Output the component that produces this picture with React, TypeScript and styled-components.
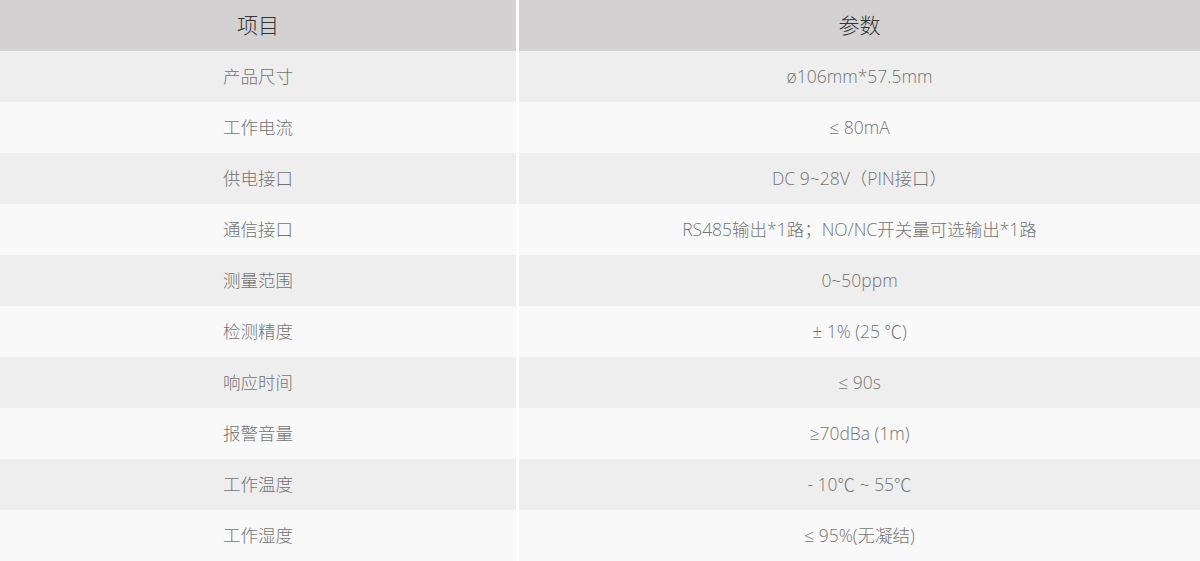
import React from "react";
import styled, {createGlobalStyle} from "styled-components";

const GlobalStyle = createGlobalStyle`
    html, body {
        margin: 0;
        padding: 0;
        background: #ffffff;
    }
    body {
        font-family: "Open Sans", "Noto Sans CJK SC", sans-serif;
    }
`;

const Table = styled.div`
    width: 1200px;
    display: flex;
    flex-direction: column;
`;

const Row = styled.div`
    display: grid;
    grid-template-columns: 516px 1fr;
    column-gap: 3px;
    height: 51px;
`;

const Cell = styled.div<{$head?: boolean; $shade?: boolean}>`
    display: flex;
    align-items: center;
    justify-content: center;
    padding-bottom: ${p => (p.$head ? "4px" : "2px")};
    background: ${p => (p.$head ? "#d3d1d2" : p.$shade ? "#eeeeee" : "#f9f9f9")};
    color: ${p => (p.$head ? "#333333" : "#747474")};
    font-size: ${p => (p.$head ? "21px" : "17.5px")};
    font-weight: 300;
    white-space: nowrap;
`;

const specs: [string, string][] = [
    ["产品尺寸", "ø106mm*57.5mm"],
    ["工作电流", "≤ 80mA"],
    ["供电接口", "DC 9~28V（PIN接口）"],
    ["通信接口", "RS485输出*1路；NO/NC开关量可选输出*1路"],
    ["测量范围", "0~50ppm"],
    ["检测精度", "± 1% (25 ℃)"],
    ["响应时间", "≤ 90s"],
    ["报警音量", "≥70dBa (1m)"],
    ["工作温度", "- 10℃ ~ 55℃"],
    ["工作湿度", "≤ 95%(无凝结)"],
];

export default function App() {
    return (
        <>
            <GlobalStyle />
            <Table>
                <Row>
                    <Cell $head>项目</Cell>
                    <Cell $head>参数</Cell>
                </Row>
                {specs.map(([name, value], i) => (
                    <Row key={name}>
                        <Cell $shade={i % 2 === 0}>{name}</Cell>
                        <Cell $shade={i % 2 === 0}>{value}</Cell>
                    </Row>
                ))}
            </Table>
        </>
    );
}
